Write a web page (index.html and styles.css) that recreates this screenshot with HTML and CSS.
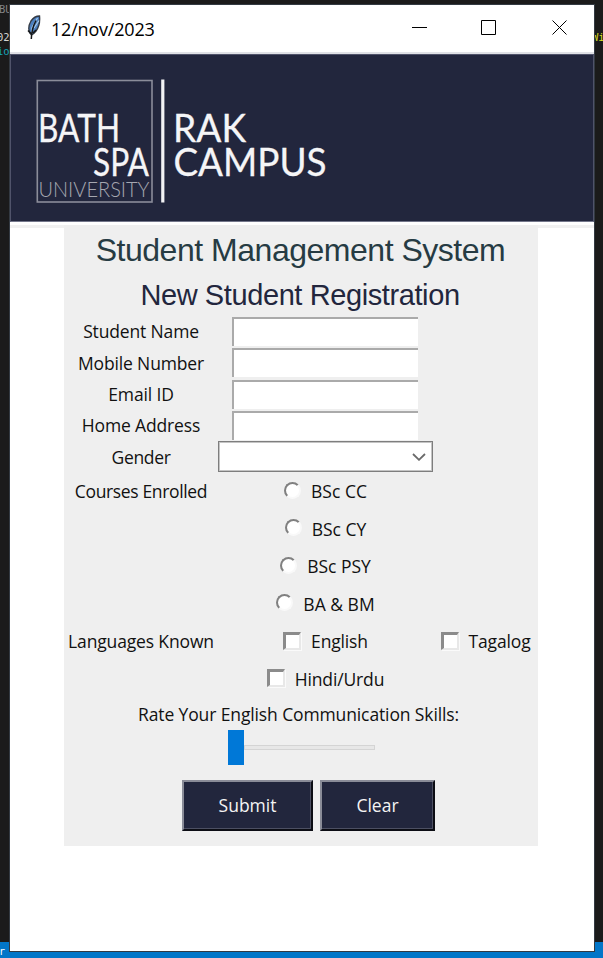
FILE: index.html
```html
<!DOCTYPE html>
<html lang="en">
<head>
<meta charset="utf-8">
<title>12/nov/2023</title>
<link rel="stylesheet" href="styles.css">
</head>
<body>
<div class="editor-text editor-bu">BU</div>
<div class="editor-text editor-02">02</div>
<div class="editor-text editor-io">io</div>
<div class="editor-text editor-wi">Wi</div>
<div class="status-bar">r</div>
<main class="window">
  <header class="titlebar">
    <svg class="feather" width="14" height="25" viewBox="0 0 14 25"><path d="M4.500 20C1 17 1 11 4 6C6 3 9 1 12.500 1C13 6 12 12 9 16C7.500 18 6 19 4.500 20Z" fill="#4b7fc0" stroke="#343b45" stroke-width="1.400"/><path d="M10.500 3L5 12.500L4.500 19M12 5.500L7 13" stroke="#a9cbea" stroke-width="1.200" fill="none"/><path d="M9 5.500C6 11 4.500 16 4.300 24M1 15.500L4 18.500M6 18L9 15" stroke="#141619" stroke-width="1.500" fill="none"/></svg>
    <h1 class="window-title">12/nov/2023</h1>
    <svg class="controls" width="160" height="20" viewBox="0 0 160 20"><path d="M2 9.500H17M71.500 2.500H85.500V16.500H71.500ZM142.500 2.500L156.500 16.500M156.500 2.500L142.500 16.500" fill="none" stroke="#000" stroke-width="1"/></svg>
  </header>
  <div class="banner">
    <svg class="logo" width="310" height="140" viewBox="30 70 310 140">
      <rect x="37.300" y="80.500" width="114.700" height="121.500" fill="none" stroke="#8b8d9a" stroke-width="1.600"/>
      <rect x="161.200" y="79.500" width="3.200" height="123" fill="#f2f2f4"/>
      <g class="logo-text">
        <text x="38" y="142" textLength="82" lengthAdjust="spacingAndGlyphs">BATH</text>
        <text x="93" y="175.500" textLength="56" lengthAdjust="spacingAndGlyphs">SPA</text>
        <text x="173" y="142" textLength="73" lengthAdjust="spacingAndGlyphs">RAK</text>
        <text x="173.500" y="176" textLength="153" lengthAdjust="spacingAndGlyphs">CAMPUS</text>
        <text class="university" x="38.500" y="196.500" textLength="111" lengthAdjust="spacingAndGlyphs">UNIVERSITY</text>
      </g>
    </svg>
  </div>
  <form class="form">
    <h2 class="title">Student Management System</h2>
    <h3 class="subtitle">New Student Registration</h3>
    <div class="row"><label class="snug">Student Name</label><div class="entry"></div></div>
    <div class="row"><label class="snug">Mobile Number</label><div class="entry"></div></div>
    <div class="row"><label class="snug">Email ID</label><div class="entry"></div></div>
    <div class="row"><label class="snug">Home Address</label><div class="entry"></div></div>
    <div class="row"><label class="tight">Gender</label><div class="combo"><svg width="14" height="8" viewBox="0 0 14 8"><path d="M1 1L7 6.800L13 1" fill="none" stroke="#6a6a6a" stroke-width="1.800"/></svg></div></div>
    <div class="row tall"><label class="tight">Courses Enrolled</label><div class="choice"><i class="radio"></i><span>BSc CC</span></div></div>
    <div class="row tall"><span></span><div class="choice"><i class="radio"></i><span>BSc CY</span></div></div>
    <div class="row tall"><span></span><div class="choice"><i class="radio"></i><span>BSc PSY</span></div></div>
    <div class="row tall"><span></span><div class="choice"><i class="radio"></i><span>BA &amp; BM</span></div></div>
    <div class="row tall"><label class="snug">Languages Known</label><div class="choice"><i class="check"></i><span class="snug">English</span></div><div class="choice"><i class="check"></i><span class="snug">Tagalog</span></div></div>
    <div class="row tall"><span></span><div class="choice"><i class="check"></i><span class="snug">Hindi/Urdu</span></div></div>
    <div class="rate">Rate Your English Communication Skills:</div>
    <div class="slider"><i class="thumb"></i><i class="track"></i></div>
    <div class="buttons"><button type="button" class="submit">Submit</button><button type="button" class="clear">Clear</button></div>
  </form>
</main>
</body>
</html>
```
FILE: styles.css
```css
* { box-sizing: border-box; }
body { margin: 0; width: 603px; height: 958px; padding: 5px 9px 7px 10px; background: #1b1b1b; position: relative; overflow: hidden; font-family: "Open Sans", sans-serif; font-size: 17.5px; color: #111; }
.editor-text { position: absolute; font: 10.5px/12px "DejaVu Sans Mono", monospace; }
.editor-bu { left: -1px; top: 3px; color: #858585; }
.editor-02 { left: -3px; top: 31px; color: #d4d4d4; }
.editor-io { left: -3px; top: 45px; color: #16a3b8; }
.editor-wi { left: 592px; top: 31px; color: #d6dc22; }
.status-bar { position: absolute; left: 0; bottom: 0; width: 603px; height: 16px; background: #0276c8; color: #fff; font: 10px/19px "DejaVu Sans Mono", monospace; text-indent: -1px; }
.window { position: relative; width: 584px; height: 946px; background: #fff; box-shadow: 0 0 0 1px #333a42; }
.window::before { content: ""; position: absolute; left: 0; top: 220px; width: 584px; height: 3px; background: #f1f1f1; }
.titlebar { height: 49px; display: flex; align-items: center; background: #fff; border-bottom: 2px solid #e0e1e6; }
.feather { margin: -2px 0 0 17px; }
.window-title { font-size: 18px; font-weight: 400; margin: 0 0 0 10px; line-height: 24px; color: #000; white-space: nowrap; letter-spacing: -0.2px; }
.controls { margin: -1px 24px 0 auto; }
.banner { height: 168px; background: #22263d; border: 1px solid #50536a; border-bottom-color: #73768a; padding: 15px 0 0 19px; }
.logo { display: block; }
.logo-text { font-family: Lato, sans-serif; font-size: 38px; fill: #f5f5f7; stroke: #f5f5f7; stroke-width: 0.3px; }
.university { font-size: 22px; font-weight: 300; fill: #a5a7b0; stroke: none; }
.form { position: relative; margin: 3px 0 0 54px; width: 474px; height: 621px; background: #efefef; }
.title, .subtitle { font-family: "Liberation Sans", Arial, sans-serif; font-weight: 400; text-align: center; margin: 0; white-space: nowrap; }
.title { font-size: 32px; height: 48px; line-height: 50px; color: #263b43; letter-spacing: -0.48px; padding-right: 1px; }
.subtitle { font-size: 29px; height: 42.6px; line-height: 44px; color: #22263d; letter-spacing: -0.4px; padding-right: 2px; }
.row { display: grid; grid-template-columns: 154px 215px 105px; height: 31.4px; align-items: center; justify-items: center; white-space: nowrap; line-height: 24px; }
.tall { height: 37.5px; }
.snug { letter-spacing: -0.15px; }
.tight { letter-spacing: -0.35px; }
.entry { width: 186px; height: 29px; margin-left: -1px; background: #fff; border-top: 2px solid #aaa; border-left: 2px solid #aaa; }
.combo { width: 215px; height: 31px; background: #fff; border: 1.5px solid #7e7e7e; box-shadow: inset 0 0 0 1px #c4c4c4; display: flex; align-items: center; justify-content: flex-end; padding-right: 6px; }
.choice { display: flex; align-items: center; gap: 10px; }
.radio { width: 17px; height: 17px; border-radius: 50%; background: #fff; border: 2px solid #f9f9f9; border-top-color: #808080; border-left-color: #808080; margin-top: -2px; }
.check { width: 18px; height: 18px; background: #fff; border: 2px solid #e8e8e8; border-top: 3px solid #8b8b8b; border-left: 3px solid #8b8b8b; box-shadow: 1px 1px 0 #fafafa; margin-top: -1px; }
.rate { height: 32.4px; padding-left: 74px; line-height: 33px; white-space: nowrap; letter-spacing: -0.12px; }
.slider { height: 36px; display: flex; align-items: center; padding-left: 164px; }
.thumb { width: 16px; height: 35px; background: #0078d7; }
.track { width: 131px; height: 5px; background: #e7e7e7; border: 1px solid #d4d4d4; }
.buttons { display: flex; gap: 7px; margin: 14px 0 0 118px; }
button { height: 51px; background: #22263d; color: #f4f4f4; font: inherit; padding: 0 0 1px; border-style: solid; border-width: 2px; border-color: #8a8c98 #0c0d14 #0c0d14 #8a8c98; box-shadow: inset -1px -1px 0 #4c4f62; }
.submit { width: 131px; }
.clear { width: 115px; }
```
